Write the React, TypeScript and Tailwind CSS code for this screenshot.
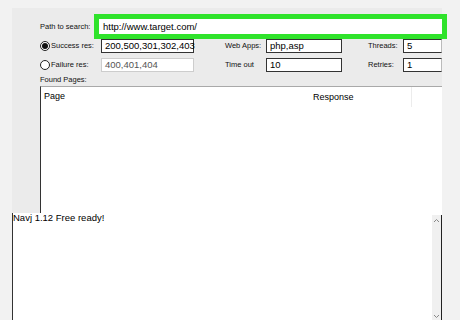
import React from "react";

const font = { fontFamily: '"Liberation Sans", Arial, sans-serif' };

function Radio({ checked }: { checked?: boolean }) {
  return (
    <span className="flex h-[10px] w-[10px] shrink-0 items-center justify-center rounded-full border border-[#222] bg-white">
      {checked && <span className="h-[6px] w-[6px] rounded-full bg-[#111]" />}
    </span>
  );
}

function Field({ value, w, muted, open }: { value: string; w: string; muted?: boolean; open?: boolean }) {
  return (
    <div
      className={`flex h-[14px] items-center bg-white pl-[3px] text-[9.5px] leading-none ${w} ${
        muted ? "border border-[#cdcdcd] text-[#555]" : open ? "border border-[#333] border-r-[#bbb] text-black" : "border border-[#333] text-black"
      }`}
    >
      {value}
    </div>
  );
}

function Label({ text, w }: { text: string; w: string }) {
  return <span className={`shrink-0 text-[7.5px] leading-none text-[#111] ${w}`}>{text}</span>;
}

function OptionRow({ radio, label, res, muted, appLabel, app, numLabel, num }: any) {
  return (
    <div className="flex h-[14px] items-center pl-[28px]">
      <div className="flex w-[61px] items-center gap-[1px]">
        <Radio checked={radio} />
        <Label text={label} w="" />
      </div>
      <Field value={res} w="w-[93px]" muted={muted} />
      <div className="w-[31px]" />
      <Label text={appLabel} w="w-[41px]" />
      <Field value={app} w="w-[76px]" />
      <div className="w-[26px]" />
      <Label text={numLabel} w="w-[35px]" />
      <Field value={num} w="w-[39px]" open />
    </div>
  );
}

export default function App() {
  return (
    <div className="h-[320px] w-[460px] overflow-hidden bg-[#f2f2f2]" style={font}>
      <div className="ml-[12px] mt-[8px] flex h-[312px] w-[430px] flex-col bg-[#ebebeb]">
        <div className="mt-[6px] flex items-center pl-[28px]">
          <Label text="Path to search:" w="w-[54px]" />
          <div className="h-[25px] w-[353px] shrink-0 border-[5px] border-[#2fe32b] bg-white">
            <div className="flex h-full items-center pl-[4px] text-[9.5px] leading-none text-black">http://www.target.com/</div>
          </div>
        </div>

        <div className="mt-[0px]">
          <OptionRow radio label="Success res:" res="200,500,301,302,403" appLabel="Web Apps:" app="php,asp" numLabel="Threads:" num="5" />
        </div>
        <div className="mt-[5px]">
          <OptionRow label="Failure res:" res="400,401,404" muted appLabel="Time out" app="10" numLabel="Retries:" num="1" />
        </div>

        <div className="mt-[2px] flex h-[12px] items-center pl-[28px]">
          <Label text="Found Pages:" w="" />
        </div>

        <div className="ml-[28px] h-[127px] w-[402px] border-l border-t border-l-[#333] border-t-[#a9a9a9] bg-white">
          <div className="grid h-[20px] grid-cols-[272px_99px_1fr] items-center text-[9px] text-black">
            <span className="pl-[3px]">Page</span>
            <span className="h-full border-r border-[#ececec] leading-[20px]">Response</span>
            <span />
          </div>
        </div>

        <div className="flex h-[107px] w-[430px] bg-white">
          <div className="flex-1 overflow-hidden border-l border-[#333]">
            <p className="-mt-[1px] whitespace-nowrap text-[9.5px] leading-[12px] text-black">Navj 1.12 Free ready!</p>
          </div>
          <div className="mt-[2px] flex w-[10px] flex-col items-center justify-between border-r border-[#222] bg-[#f0f0f0] text-[#999]">
            <svg width="7" height="6" viewBox="0 0 7 6" className="mt-[3px]">
              <path d="M1 4 L3.5 1.5 L6 4" fill="none" stroke="#888" strokeWidth="1" />
            </svg>
            <svg width="7" height="6" viewBox="0 0 7 6" className="mb-[1px]">
              <path d="M1 2 L3.5 4.5 L6 2" fill="none" stroke="#888" strokeWidth="1" />
            </svg>
          </div>
        </div>
      </div>
    </div>
  );
}
